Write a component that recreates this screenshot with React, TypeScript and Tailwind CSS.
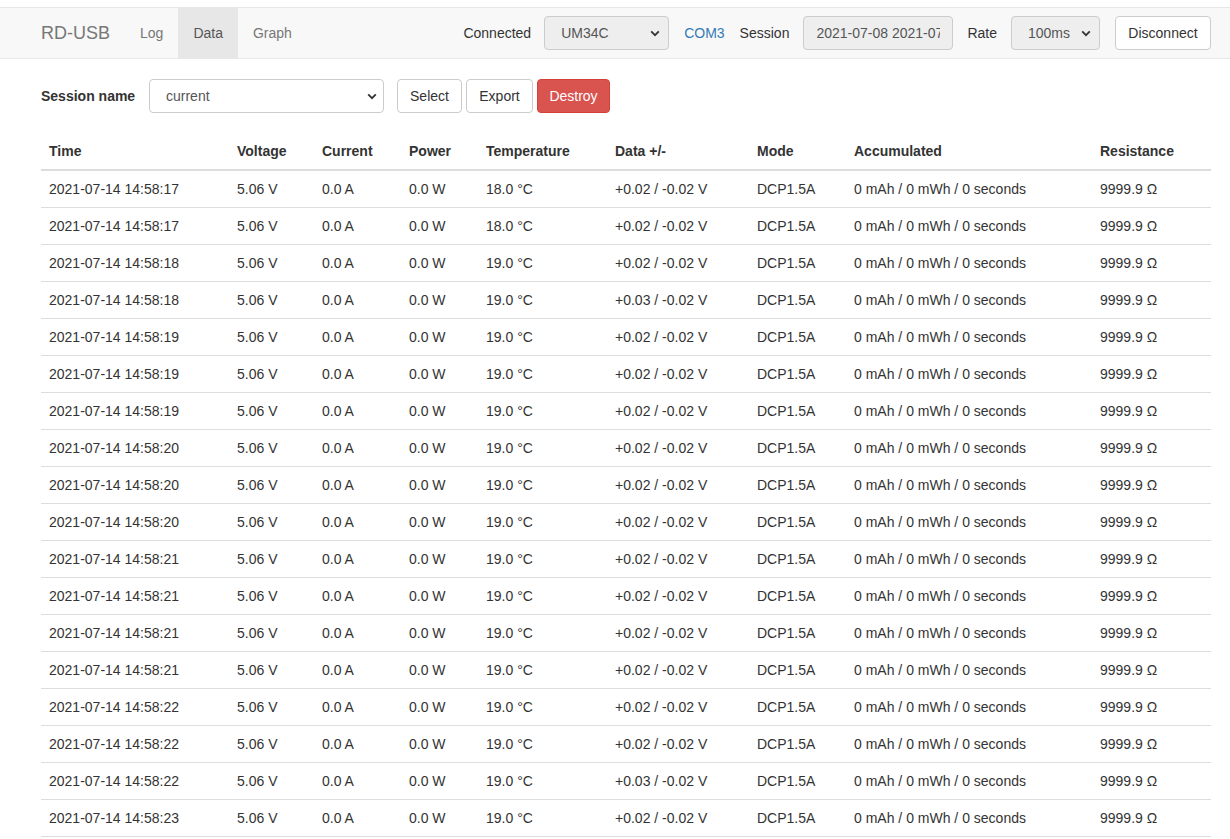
import React from "react";

const rows: [string, string, string][] = [
  ["2021-07-14 14:58:17", "18.0 °C", "+0.02 / -0.02 V"],
  ["2021-07-14 14:58:17", "18.0 °C", "+0.02 / -0.02 V"],
  ["2021-07-14 14:58:18", "19.0 °C", "+0.02 / -0.02 V"],
  ["2021-07-14 14:58:18", "19.0 °C", "+0.03 / -0.02 V"],
  ["2021-07-14 14:58:19", "19.0 °C", "+0.02 / -0.02 V"],
  ["2021-07-14 14:58:19", "19.0 °C", "+0.02 / -0.02 V"],
  ["2021-07-14 14:58:19", "19.0 °C", "+0.02 / -0.02 V"],
  ["2021-07-14 14:58:20", "19.0 °C", "+0.02 / -0.02 V"],
  ["2021-07-14 14:58:20", "19.0 °C", "+0.02 / -0.02 V"],
  ["2021-07-14 14:58:20", "19.0 °C", "+0.02 / -0.02 V"],
  ["2021-07-14 14:58:21", "19.0 °C", "+0.02 / -0.02 V"],
  ["2021-07-14 14:58:21", "19.0 °C", "+0.02 / -0.02 V"],
  ["2021-07-14 14:58:21", "19.0 °C", "+0.02 / -0.02 V"],
  ["2021-07-14 14:58:21", "19.0 °C", "+0.02 / -0.02 V"],
  ["2021-07-14 14:58:22", "19.0 °C", "+0.02 / -0.02 V"],
  ["2021-07-14 14:58:22", "19.0 °C", "+0.02 / -0.02 V"],
  ["2021-07-14 14:58:22", "19.0 °C", "+0.03 / -0.02 V"],
  ["2021-07-14 14:58:23", "19.0 °C", "+0.02 / -0.02 V"],
];

const Chevron = () => (
  <svg width="10" height="7" viewBox="0 0 10 7" className="shrink-0">
    <path d="M1.2 1.4 L5 5.2 L8.8 1.4" fill="none" stroke="#333" strokeWidth="1.8" />
  </svg>
);

const cols = [
  { name: "Time", w: "w-[188px]" },
  { name: "Voltage", w: "w-[85px]" },
  { name: "Current", w: "w-[87px]" },
  { name: "Power", w: "w-[77px]" },
  { name: "Temperature", w: "w-[129px]" },
  { name: "Data +/-", w: "w-[142px]" },
  { name: "Mode", w: "w-[97px]" },
  { name: "Accumulated", w: "w-[246px]" },
  { name: "Resistance", w: "w-[119px]" },
];

export default function App() {
  return (
    <div className="h-[839px] overflow-hidden bg-white pt-[7px] text-[14px] leading-[20px] text-[#333] font-['Liberation_Sans',Arial,sans-serif]">
      <nav className="flex h-[52px] items-center border-y border-[#e7e7e7] bg-[#f8f8f8] pl-[26px] pr-[19px]">
        <div className="px-[15px] text-[18px] text-[#777]">RD-USB</div>
        <div className="flex h-[50px] items-stretch">
          <div className="flex items-center px-[15px] text-[#777]">Log</div>
          <div className="flex items-center bg-[#e7e7e7] px-[15px] text-[#555]">Data</div>
          <div className="flex items-center px-[15px] text-[#777]">Graph</div>
        </div>
        <div className="ml-auto flex items-center">
          <span className="mr-[13px]">Connected</span>
          <div className="flex h-[34px] w-[125px] items-center justify-between rounded-[4px] border border-[#ccc] bg-[#eee] pl-[16px] pr-[8px] text-[#555]">
            <span>UM34C</span>
            <Chevron />
          </div>
          <span className="ml-[15px] text-[#337ab7]">COM3</span>
          <span className="ml-[15px]">Session</span>
          <div className="ml-[14px] flex h-[34px] w-[150px] items-center overflow-hidden whitespace-nowrap rounded-[4px] border border-[#ccc] bg-[#eee] px-[12px] text-[#555]">
            <span className="block w-[125px] overflow-hidden">2021-07-08 2021-07-14</span>
          </div>
          <span className="ml-[14px]">Rate</span>
          <div className="ml-[14px] flex h-[34px] w-[89px] items-center justify-between rounded-[4px] border border-[#ccc] bg-[#eee] pl-[16px] pr-[8px] text-[#555]">
            <span>100ms</span>
            <Chevron />
          </div>
          <div className="ml-[15px] flex h-[34px] w-[96px] items-center justify-center rounded-[4px] border border-[#ccc] bg-white">
            Disconnect
          </div>
        </div>
      </nav>

      <div className="px-[41px] pr-[19px] pt-[20px]">
        <div className="flex h-[34px] items-center">
          <span className="w-[108px] font-bold">Session name</span>
          <div className="flex h-[34px] w-[235px] items-center justify-between rounded-[4px] border border-[#ccc] bg-white pl-[16px] pr-[6px] text-[#555]">
            <span>current</span>
            <Chevron />
          </div>
          <div className="ml-[13px] flex h-[34px] w-[65px] items-center justify-center rounded-[4px] border border-[#ccc] bg-white">
            Select
          </div>
          <div className="ml-[4px] flex h-[34px] w-[67px] items-center justify-center rounded-[4px] border border-[#ccc] bg-white">
            Export
          </div>
          <div className="ml-[4px] flex h-[34px] w-[73px] items-center justify-center rounded-[4px] border border-[#d43f3a] bg-[#d9534f] text-white">
            Destroy
          </div>
        </div>

        <table className="mt-[20px] w-[1170px] table-fixed border-collapse">
          <thead>
            <tr className="border-b-2 border-[#ddd]">
              {cols.map((c) => (
                <th key={c.name} className={`${c.w} p-[8px] text-left font-bold`}>
                  {c.name}
                </th>
              ))}
            </tr>
          </thead>
          <tbody>
            {rows.map((r, i) => (
              <tr key={i} className="border-b border-[#ddd]">
                <td className="whitespace-nowrap p-[8px]">{r[0]}</td>
                <td className="whitespace-nowrap p-[8px]">5.06 V</td>
                <td className="whitespace-nowrap p-[8px]">0.0 A</td>
                <td className="whitespace-nowrap p-[8px]">0.0 W</td>
                <td className="whitespace-nowrap p-[8px]">{r[1]}</td>
                <td className="whitespace-nowrap p-[8px]">{r[2]}</td>
                <td className="whitespace-nowrap p-[8px]">DCP1.5A</td>
                <td className="whitespace-nowrap p-[8px]">0 mAh / 0 mWh / 0 seconds</td>
                <td className="whitespace-nowrap p-[8px]">9999.9 Ω</td>
              </tr>
            ))}
          </tbody>
        </table>
      </div>
    </div>
  );
}
